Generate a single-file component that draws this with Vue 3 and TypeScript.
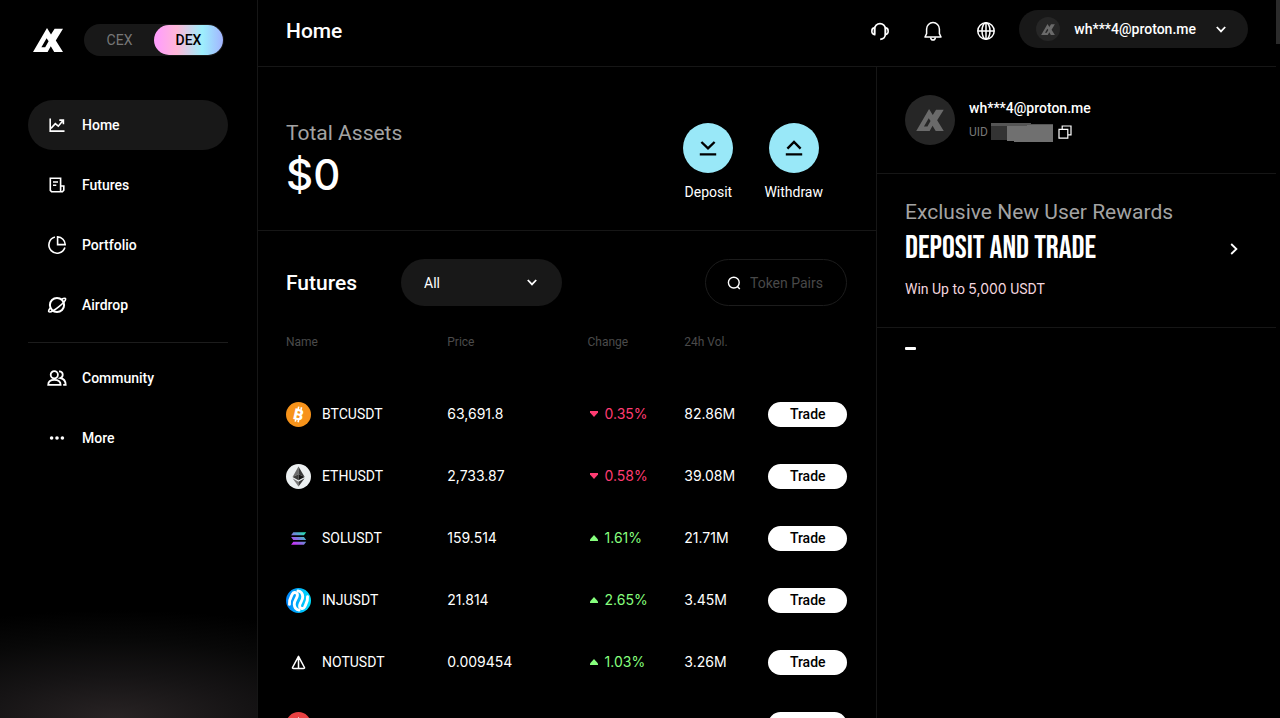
<script setup lang="ts">
import { ref } from 'vue'

interface NavItem {
  label: string
  icon: string
}

interface Market {
  pair: string
  coin: string
  price: string
  change: string
  up: boolean
  volume: string
}

const mainNav: NavItem[] = [
  { label: 'Home', icon: 'home' },
  { label: 'Futures', icon: 'futures' },
  { label: 'Portfolio', icon: 'portfolio' },
  { label: 'Airdrop', icon: 'airdrop' },
]

const moreNav: NavItem[] = [
  { label: 'Community', icon: 'community' },
  { label: 'More', icon: 'more' },
]

const markets: Market[] = [
  { pair: 'BTCUSDT', coin: 'btc', price: '63,691.8', change: '0.35%', up: false, volume: '82.86M' },
  { pair: 'ETHUSDT', coin: 'eth', price: '2,733.87', change: '0.58%', up: false, volume: '39.08M' },
  { pair: 'SOLUSDT', coin: 'sol', price: '159.514', change: '1.61%', up: true, volume: '21.71M' },
  { pair: 'INJUSDT', coin: 'inj', price: '21.814', change: '2.65%', up: true, volume: '3.45M' },
  { pair: 'NOTUSDT', coin: 'not', price: '0.009454', change: '1.03%', up: true, volume: '3.26M' },
  { pair: 'AVAXUSDT', coin: 'avax', price: '', change: '', up: true, volume: '' },
]

const active = ref('Home')
const venue = ref('DEX')
const filter = ref('All')
const query = ref('')
const email = 'wh***4@proton.me'
</script>

<template>
  <div class="app">
    <svg class="defs" aria-hidden="true">
      <symbol id="logo" viewBox="0 0 30 24">
        <path
          fill="currentColor"
          fill-rule="evenodd"
          d="M0 24 14 0 18 6.6 21.6.7H30L22.8 12.4 30 24H21.2L17.8 18.2 14.6 24ZM8.4 19.2H12.2L15.6 13.2 13.6 10.2Z"
        />
      </symbol>
      <symbol id="chevron" viewBox="0 0 10 7">
        <path d="M.8 1 5 5.4 9.2 1" fill="none" stroke="currentColor" stroke-width="1.8" />
      </symbol>
    </svg>

    <aside class="sidebar">
      <div class="brand">
        <svg class="logo"><use href="#logo" /></svg>
        <div class="toggle">
          <button
            v-for="v in ['CEX', 'DEX']"
            :key="v"
            type="button"
            :class="{ on: venue === v }"
            @click="venue = v"
          >
            {{ v }}
          </button>
        </div>
      </div>

      <nav class="nav">
        <a
          v-for="item in mainNav"
          :key="item.label"
          href="#"
          class="nav-item"
          :class="{ current: active === item.label }"
          @click.prevent="active = item.label"
        >
          <svg class="nav-icon" viewBox="0 0 20 20" fill="none" stroke="currentColor" stroke-width="1.6">
            <g v-if="item.icon === 'home'">
              <path d="M3.2 3.5v12.6H17.5" />
              <path d="M4 13.4 8.3 8.6 11.3 11.2 16 5.6M12.3 5.1H16.4V9.2" />
            </g>
            <g v-else-if="item.icon === 'futures'">
              <path d="M3.3 3.2H13.6V16.8H4.6L3.3 15.4ZM13.6 11H16.8V15.2L15.4 16.8H13.2" />
              <path d="M6 7H11M6 10.2H9.3" />
            </g>
            <g v-else-if="item.icon === 'portfolio'">
              <path d="M7.9 2.1A8.2 8.2 0 1 0 17.9 12.6" />
              <path d="M10.6 1.9V9.6H18.2A7.8 7.8 0 0 0 10.6 1.9Z" />
            </g>
            <g v-else>
              <circle cx="10" cy="10" r="7.1" stroke-width="2" />
              <path d="M14.5 4.2C17 3 18.6 2.9 18.6 4.2 18.4 7 6.4 16.8 2.8 17 1.1 17 1.3 15.6 3 13.2" />
            </g>
          </svg>
          <span>{{ item.label }}</span>
        </a>
        <hr class="nav-rule" />
        <a
          v-for="item in moreNav"
          :key="item.label"
          href="#"
          class="nav-item"
          :class="{ current: active === item.label }"
          @click.prevent="active = item.label"
        >
          <svg class="nav-icon" viewBox="0 0 20 20" fill="none" stroke="currentColor" stroke-width="1.8">
            <g v-if="item.icon === 'community'">
              <circle cx="7.3" cy="6.8" r="3.6" />
              <path d="M1.2 16.9C1.2 13 3.6 11.9 7.3 11.9S13.6 13 13.6 16.9Z" />
              <path d="M12 3.3C16.6 3.2 16.8 8.6 13.4 10 17 10.8 18.6 12.8 18.7 16.9H16.2" />
            </g>
            <g v-else fill="currentColor" stroke="none">
              <circle cx="4.6" cy="10" r="1.8" />
              <circle cx="10" cy="10" r="1.8" />
              <circle cx="15.4" cy="10" r="1.8" />
            </g>
          </svg>
          <span>{{ item.label }}</span>
        </a>
      </nav>
    </aside>

    <div class="page">
      <header class="topbar">
        <h1>Home</h1>
        <div class="tools">
          <button type="button" aria-label="Support">
            <svg viewBox="0 0 20 20" fill="none" stroke="currentColor" stroke-width="1.6">
              <path d="M4.6 13.6V8A5.4 5.4 0 0 1 15.4 8V13C15.4 16.4 13.6 18 10.2 18.4" />
              <path d="M4.6 6.8C.9 6.8.9 13.6 4.6 13.6ZM15.4 6.8C19.1 6.8 19.1 13.6 15.4 13.6Z" />
            </svg>
          </button>
          <button type="button" aria-label="Notifications">
            <svg viewBox="0 0 20 20" fill="none" stroke="currentColor" stroke-width="1.5">
              <path d="M2 16H18L16.4 12.6V8A6.4 6.4 0 0 0 3.6 8V12.6Z" stroke-linejoin="round" />
              <path d="M7.6 16.4C8 20 12 20 12.4 16.4" />
            </svg>
          </button>
          <button type="button" aria-label="Language">
            <svg viewBox="0 0 20 20" fill="none" stroke="currentColor" stroke-width="1.5">
              <circle cx="10" cy="10" r="8.2" />
              <ellipse cx="10" cy="10" rx="4" ry="8.2" />
              <path d="M1.8 10H18.2M10 1.8V18.2" />
            </svg>
          </button>
        </div>
        <button type="button" class="account">
          <span class="avatar small"><svg><use href="#logo" /></svg></span>
          <span>{{ email }}</span>
          <svg class="chev"><use href="#chevron" /></svg>
        </button>
      </header>

      <div class="columns">
        <main class="center">
          <section class="assets">
            <div>
              <h2 class="muted-title">Total Assets</h2>
              <p class="balance">$0</p>
            </div>
            <div class="actions">
              <button type="button">
                <span class="disc">
                  <svg viewBox="0 0 18 18" fill="none" stroke="currentColor" stroke-width="2.4">
                    <path d="M2.4 3 9 9.4 15.6 3M.8 15.4H17.2" />
                  </svg>
                </span>
                <span>Deposit</span>
              </button>
              <button type="button">
                <span class="disc">
                  <svg viewBox="0 0 18 18" fill="none" stroke="currentColor" stroke-width="2.4">
                    <path d="M2.4 9.6 9 3 15.6 9.6M.8 15.4H17.2" />
                  </svg>
                </span>
                <span>Withdraw</span>
              </button>
            </div>
          </section>

          <section class="futures">
            <div class="filters">
              <h2>Futures</h2>
              <div class="select">
                <select v-model="filter" aria-label="Market filter">
                  <option>All</option>
                </select>
                <svg class="chev"><use href="#chevron" /></svg>
              </div>
              <label class="search">
                <svg viewBox="0 0 14 14" fill="none" stroke="currentColor" stroke-width="1.4">
                  <circle cx="6.8" cy="6.6" r="5.4" />
                  <path d="M10.4 10.6 12.8 13" />
                </svg>
                <input v-model="query" type="text" placeholder="Token Pairs" aria-label="Token Pairs" />
              </label>
            </div>

            <table>
              <colgroup>
                <col class="c-name" />
                <col class="c-price" />
                <col class="c-change" />
                <col class="c-vol" />
                <col class="c-trade" />
              </colgroup>
              <thead>
                <tr>
                  <th>Name</th>
                  <th>Price</th>
                  <th>Change</th>
                  <th>24h Vol.</th>
                  <th></th>
                </tr>
              </thead>
              <tbody>
                <tr v-for="m in markets" :key="m.pair">
                  <td>
                    <div class="pair">
                      <svg class="coin" viewBox="0 0 26 26">
                        <g v-if="m.coin === 'btc'">
                          <circle cx="13" cy="13" r="13" fill="#f7931a" />
                          <g transform="rotate(13 13 13)">
                            <path d="M11.4 5V21M14.4 5V21" stroke="#fff" stroke-width="1.7" />
                            <rect x="10.4" y="7.6" width="5" height="10.8" fill="#f7931a" />
                            <text x="13" y="18.8" text-anchor="middle" class="coin-letter">B</text>
                          </g>
                        </g>
                        <g v-else-if="m.coin === 'eth'">
                          <circle cx="13" cy="13" r="13" fill="#ecf0f1" />
                          <path d="M13 2.6V10.6L6.8 13.4Z" fill="#6b6b6b" />
                          <path d="M13 2.6V10.6L19.4 13.4Z" fill="#3a3a3a" />
                          <path d="M6.8 13.4 13 10.6V17Z" fill="#3c3c3b" />
                          <path d="M19.4 13.4 13 10.6V17Z" fill="#141414" />
                          <path d="M6.8 14.8 13 18.4V23.4Z" fill="#7b7b7b" />
                          <path d="M19.4 14.8 13 18.4V23.4Z" fill="#3c3c3b" />
                        </g>
                        <g v-else-if="m.coin === 'sol'">
                          <defs>
                            <linearGradient id="sol" gradientUnits="userSpaceOnUse" x1="19" y1="6" x2="8" y2="19">
                              <stop offset="0" stop-color="#21e6b0" />
                              <stop offset=".5" stop-color="#6f86d8" />
                              <stop offset="1" stop-color="#c930fa" />
                            </linearGradient>
                          </defs>
                          <path
                            fill="url(#sol)"
                            d="M7.6 6.6H21L18.7 9.7H5.3ZM5.3 11.4H18.7L21 14.5H7.6ZM7.6 16.3H21L18.7 19.4H5.3Z"
                          />
                        </g>
                        <g v-else-if="m.coin === 'inj'">
                          <defs>
                            <linearGradient id="inj" x1="0" x2="1">
                              <stop offset="0" stop-color="#0082fa" />
                              <stop offset="1" stop-color="#00e2fe" />
                            </linearGradient>
                          </defs>
                          <circle cx="13" cy="13" r="13" fill="url(#inj)" />
                          <g fill="none" stroke="#fff" stroke-width="3" stroke-linecap="round">
                            <path d="M3.6 17C3 12 5 9.6 6.6 6.4 8.2 3.4 12.4 4.6 11.8 8 11.2 11.4 8.4 13 8.6 17 8.8 20.6 10.8 22.6 13.6 23" />
                            <path d="M22.4 9C23 14 21 16.4 19.4 19.6 17.8 22.6 13.6 21.4 14.2 18 14.8 14.6 17.6 13 17.4 9 17.2 5.4 15.2 3.4 12.4 3" />
                          </g>
                        </g>
                        <g v-else-if="m.coin === 'not'" fill="none" stroke="#fff" stroke-width="1.6" stroke-linejoin="round">
                          <path d="M13 6.6 6.8 18.2C6.6 19 7 19.2 7.8 19.2H18.2C19 19.2 19.4 19 19.2 18.2ZM13 6.6V19.2" />
                        </g>
                        <g v-else>
                          <circle cx="13" cy="13" r="13" fill="#e84142" />
                          <path d="M13 5 6 18.6H10.8L15 10ZM17 13 13.8 18.6H20Z" fill="#fff" />
                        </g>
                      </svg>
                      <span>{{ m.pair }}</span>
                    </div>
                  </td>
                  <td class="num">{{ m.price }}</td>
                  <td class="num">
                    <span v-if="m.change" class="change" :class="m.up ? 'up' : 'down'">
                      <svg viewBox="0 0 8 6">
                        <path :d="m.up ? 'M4 0 8 4.6V6H0V4.6Z' : 'M4 6 8 1.4V0H0V1.4Z'" fill="currentColor" />
                      </svg>
                      {{ m.change }}
                    </span>
                  </td>
                  <td class="num">{{ m.volume }}</td>
                  <td><button type="button" class="trade">Trade</button></td>
                </tr>
              </tbody>
            </table>
          </section>
        </main>

        <aside class="right">
          <section class="profile">
            <span class="avatar"><svg><use href="#logo" /></svg></span>
            <div>
              <p class="email">{{ email }}</p>
              <div class="uid">
                <span>UID</span>
                <svg class="mask" viewBox="0 0 62 20" aria-hidden="true">
                  <path d="M0 1H40V2H62V19H0Z" fill="#555" />
                  <path d="M0 4H16V18H0Z" fill="#333" />
                  <path d="M16 4H36V3H62V20H23V19H16Z" fill="#707070" />
                  <path d="M0 18H16V20H0Z" fill="#000" />
                </svg>
                <button type="button" aria-label="Copy UID">
                  <svg viewBox="0 0 14 14" fill="none" stroke="currentColor" stroke-width="1.2">
                    <path d="M1 4.4H9.8V13.2H1ZM4.2 4.4V1H13V9.8H9.8" />
                  </svg>
                </button>
              </div>
            </div>
          </section>
          <a class="rewards" href="#" @click.prevent>
            <div>
              <h2 class="muted-title">Exclusive New User Rewards</h2>
              <p class="promo">DEPOSIT AND TRADE</p>
              <p class="win">Win Up to <span class="num">5,000</span> USDT</p>
            </div>
            <svg class="next" viewBox="0 0 8 12" fill="none" stroke="currentColor" stroke-width="1.8">
              <path d="M1.2 1 6.4 6 1.2 11" />
            </svg>
          </a>
          <div class="pager"><span></span></div>
        </aside>
      </div>
    </div>
    <div class="scroll-thumb" aria-hidden="true"></div>
  </div>
</template>

<style>
html,
body {
  background: #000;
}
</style>

<style scoped>
.app {
  --line: #161616;
  --pill: #181818;
  position: relative;
  display: flex;
  height: 100vh;
  overflow: hidden;
  box-sizing: border-box;
  padding-right: 4px;
  background: #000;
  color: #fff;
  font-family: Roboto, "Liberation Sans", sans-serif;
  font-size: 14px;
  line-height: 20px;
}
.app *,
.app *::before {
  box-sizing: border-box;
}
.defs {
  position: absolute;
  width: 0;
  height: 0;
}
h1,
h2,
p {
  margin: 0;
  font-weight: 500;
}
button {
  padding: 0;
  border: 0;
  background: none;
  color: inherit;
  font: inherit;
  cursor: pointer;
}
a {
  color: inherit;
  text-decoration: none;
}
svg {
  display: block;
  flex: none;
}

.sidebar {
  flex: none;
  width: 258px;
  padding: 24px 29px 0 28px;
  border-right: 1px solid var(--line);
  background: radial-gradient(ellipse 340px 108px at 45% 100%, #282324 0%, #161415 38%, #080808 72%, #000 100%);
}
.brand {
  display: flex;
  align-items: center;
  gap: 21px;
  padding-left: 5px;
}
.logo {
  width: 30px;
  height: 24px;
}
.toggle {
  display: flex;
  width: 140px;
  height: 32px;
  padding: 1px;
  border-radius: 16px;
  background: var(--pill);
}
.toggle button {
  flex: 1;
  border-radius: 15px;
  color: #777;
}
.toggle .on {
  background: linear-gradient(90deg, #ff9ffa 5%, #ffb8d8 33%, #9deffc 70%, #a3b4ff 100%);
  color: #000;
  font-weight: 500;
}
.nav {
  display: flex;
  flex-direction: column;
  gap: 10px;
  margin-top: 44px;
}
.nav-item {
  display: flex;
  align-items: center;
  gap: 15px;
  height: 50px;
  padding-left: 19px;
  border-radius: 25px;
  font-weight: 500;
}
.nav-item.current {
  background: var(--pill);
}
.nav-icon {
  width: 20px;
  height: 20px;
}
.nav-rule {
  width: 100%;
  margin: 2px 0 0;
  border: 0;
  border-top: 1px solid #1c1c1c;
}

.page {
  display: flex;
  flex: 1;
  flex-direction: column;
  min-width: 0;
}
.topbar {
  display: flex;
  align-items: center;
  gap: 23px;
  padding: 10px 28px 18px;
  border-bottom: 1px solid var(--line);
}
h1,
.filters h2 {
  font-size: 21px;
  line-height: 24px;
}
h1 {
  padding-top: 3px;
}
.tools {
  display: flex;
  gap: 33px;
  margin-left: auto;
  padding-top: 3px;
}
.tools svg {
  width: 20px;
  height: 20px;
}
.account {
  display: flex;
  align-items: center;
  gap: 14px;
  height: 38px;
  padding: 0 22px 0 17px;
  border-radius: 19px;
  background: var(--pill);
  font-weight: 500;
}
.account .chev {
  margin-left: 6px;
}
.chev {
  width: 10px;
  height: 7px;
}
.avatar {
  display: grid;
  flex: none;
  place-items: center;
  width: 50px;
  height: 50px;
  border-radius: 50%;
  background: #262626;
  color: #6a6a6a;
}
.avatar svg {
  width: 28px;
  height: 22px;
}
.avatar.small {
  width: 24px;
  height: 24px;
}
.avatar.small svg {
  width: 14px;
  height: 11px;
}

.columns {
  display: flex;
  flex: 1;
  min-height: 0;
}
.center {
  flex: 1;
  min-width: 0;
  overflow: hidden;
}
.assets {
  display: flex;
  justify-content: space-between;
  padding: 52px 53px 28px 28px;
  border-bottom: 1px solid var(--line);
}
.muted-title {
  color: #a3a3a3;
  font-size: 21px;
  font-weight: 400;
  line-height: 28px;
}
.balance {
  font-family: Inter, Roboto, sans-serif;
  font-size: 42px;
  font-weight: 500;
  line-height: 48px;
  margin-top: 4px;
}
.actions {
  display: flex;
  gap: 31px;
  padding-top: 4px;
}
.actions button {
  display: flex;
  flex-direction: column;
  align-items: center;
  gap: 9px;
}
.disc {
  display: grid;
  place-items: center;
  width: 50px;
  height: 50px;
  border-radius: 50%;
  background: #99e8f8;
  color: #000;
}
.disc svg {
  width: 18px;
  height: 18px;
}

.futures {
  padding: 28px 29px 0 28px;
}
.filters {
  display: flex;
  align-items: center;
}
.filters h2 {
  width: 115px;
}
.select {
  display: flex;
  align-items: center;
  width: 161px;
  height: 47px;
  padding-right: 25px;
  border-radius: 24px;
  background: var(--pill);
}
.select select {
  flex: 1;
  width: 100%;
  height: 47px;
  margin-right: -10px;
  padding: 0 0 0 23px;
  border: 0;
  appearance: none;
  background: none;
  color: #fff;
  font: inherit;
}
.select .chev {
  pointer-events: none;
}
.search {
  display: flex;
  align-items: center;
  gap: 9px;
  width: 142px;
  height: 47px;
  margin-left: auto;
  padding: 0 16px 0 21px;
  border: 1px solid #1c1c1c;
  border-radius: 24px;
}
.search svg {
  width: 14px;
  height: 14px;
}
.search input {
  flex: 1;
  min-width: 0;
  width: 100%;
  padding: 0;
  border: 0;
  outline: 0;
  background: none;
  color: #fff;
  font: inherit;
}
.search input::placeholder {
  color: #484848;
  opacity: 1;
}

table {
  width: 100%;
  margin-top: 22px;
  border-collapse: collapse;
  table-layout: fixed;
}
.c-name {
  width: 28.75%;
}
.c-price {
  width: 25%;
}
.c-change {
  width: 17.25%;
}
.c-vol {
  width: 15%;
}
.c-trade {
  width: 14%;
}
th {
  height: 55px;
  padding: 0 0 27px;
  color: #4b4b4b;
  font-size: 12px;
  font-weight: 400;
  text-align: left;
}
td {
  height: 62px;
  padding: 0;
}
.num {
  font-family: Inter, Roboto, sans-serif;
}
.pair {
  display: flex;
  align-items: center;
  gap: 11px;
}
.coin {
  width: 25px;
  height: 25px;
}
.coin-letter {
  fill: #fff;
  font-family: Roboto, sans-serif;
  font-size: 16px;
  font-weight: 900;
}
.change {
  display: flex;
  align-items: center;
  gap: 7px;
  padding-left: 2px;
}
.change svg {
  width: 8px;
  height: 6px;
}
.up {
  color: #86ff7d;
}
.down {
  color: #ff3c72;
}
.trade {
  display: block;
  width: 100%;
  height: 25px;
  border-radius: 13px;
  background: #fff;
  color: #000;
  font-weight: 500;
}

.right {
  flex: none;
  width: 400px;
  border-left: 1px solid var(--line);
}
.profile {
  display: flex;
  gap: 14px;
  padding: 28px;
  border-bottom: 1px solid var(--line);
}
.email {
  margin-top: 3px;
}
.uid {
  display: flex;
  align-items: center;
  gap: 3px;
  margin-top: 4px;
  color: #777;
  font-size: 12px;
}
.mask {
  width: 62px;
  height: 20px;
}
.uid button {
  margin-left: 2px;
  color: #fff;
}
.uid button svg {
  width: 14px;
  height: 14px;
}
.rewards {
  display: flex;
  align-items: center;
  justify-content: space-between;
  padding: 24px 38px 28px 28px;
  border-bottom: 1px solid var(--line);
}
.promo {
  margin: 5px 0 12px;
  font-family: "Bebas Neue", "Roboto Condensed", "Liberation Sans Narrow", Roboto, sans-serif;
  font-size: 32px;
  font-weight: 400;
  line-height: 36px;
}
.win {
  color: #f3d6df;
  font-weight: 400;
}
.next {
  width: 8px;
  height: 12px;
}
.pager {
  padding: 19px 28px;
}
.pager span {
  display: block;
  width: 11px;
  height: 3px;
  border-radius: 1px;
  background: #fff;
}
.scroll-thumb {
  position: absolute;
  top: 0;
  right: 0;
  width: 4px;
  height: 44px;
  background: #2b2b2b;
}
</style>
